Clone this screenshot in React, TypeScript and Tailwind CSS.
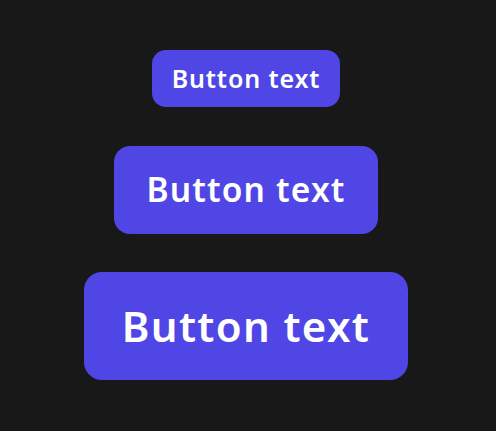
export default function App() {
  const font = { fontFamily: '"Noto Sans", "Open Sans", sans-serif' };
  return (
    <div className="w-[496px] h-[431px] bg-[#181818] flex">
      <div className="w-[492px] flex flex-col items-center pt-[50px]" style={font}>
        <button className="w-[188px] h-[57px] rounded-[14px] bg-[#4f46e5] text-white text-[25px] tracking-[0.035em] font-semibold leading-none flex items-center justify-center">
          Button text
        </button>
        <button className="mt-[39px] w-[264px] h-[88px] rounded-[16px] bg-[#4f46e5] text-white text-[33.5px] tracking-[0.035em] font-semibold leading-none flex items-center justify-center">
          Button text
        </button>
        <button className="mt-[38px] w-[324px] h-[108px] rounded-[18px] bg-[#4f46e5] text-white text-[42px] tracking-[0.032em] font-semibold leading-none flex items-center justify-center">
          Button text
        </button>
      </div>
    </div>
  );
}
